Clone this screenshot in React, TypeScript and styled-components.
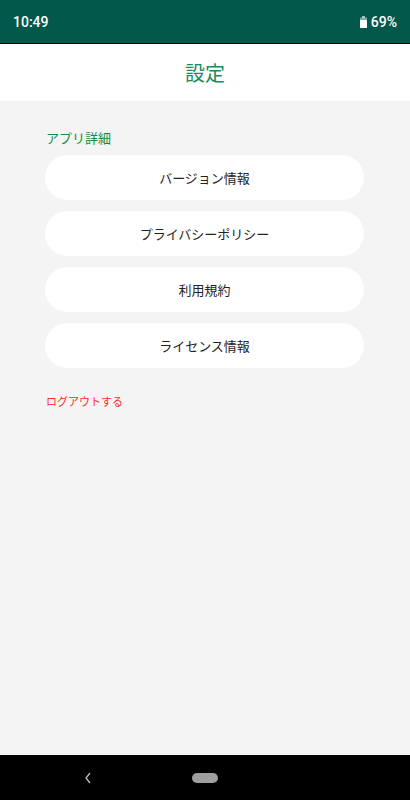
import React from "react";
import styled, { createGlobalStyle } from "styled-components";

const GlobalStyle = createGlobalStyle`
  html, body {
    margin: 0;
    padding: 0;
    background: #f4f4f4;
    font-family: Roboto, "Noto Sans CJK JP", sans-serif;
  }
`;

const Screen = styled.div`
  width: 410px;
  height: 800px;
  display: flex;
  flex-direction: column;
  background: #f4f4f4;
`;

const StatusBar = styled.div`
  height: 43px;
  background: #01584b;
  border-bottom: 1px solid #000;
  display: flex;
  align-items: center;
  justify-content: space-between;
  padding: 0 13px 0 13px;
  color: #fff;
  font-size: 14px;
  font-weight: 500;
`;

const Battery = styled.div`
  display: flex;
  align-items: center;
  gap: 4px;
`;

const Header = styled.div`
  height: 57px;
  background: #fff;
  display: flex;
  align-items: center;
  justify-content: center;
  color: #23885a;
  font-size: 20px;
  font-family: "Noto Sans CJK JP", sans-serif;
`;

const Content = styled.div`
  flex: 1;
  padding: 28px 46px 0 45px;
  display: flex;
  flex-direction: column;
  font-family: "Noto Sans CJK JP", sans-serif;
`;

const SectionLabel = styled.div`
  color: #138a4a;
  font-size: 13px;
  line-height: 18px;
  padding-left: 1px;
  margin-bottom: 8px;
`;

const MenuList = styled.div`
  display: flex;
  flex-direction: column;
  gap: 11px;
`;

const MenuButton = styled.div`
  height: 45px;
  border-radius: 23px;
  background: #fff;
  display: flex;
  align-items: center;
  justify-content: center;
  color: #222;
  font-size: 13px;
`;

const Logout = styled.div`
  margin-top: 24px;
  padding-left: 1px;
  color: #ff2a2a;
  font-size: 11px;
  line-height: 18px;
`;

const NavBar = styled.div`
  height: 45px;
  background: #000;
  display: flex;
  align-items: center;
`;

const BackButton = styled.div`
  width: 20px;
  display: flex;
  justify-content: center;
  margin-left: 78px;
`;

const HomePill = styled.div`
  width: 26px;
  height: 10px;
  border-radius: 5px;
  background: #9e9e9e;
  margin-left: 94px;
`;

const items = ["バージョン情報", "プライバシーポリシー", "利用規約", "ライセンス情報"];

export default function App() {
  return (
    <Screen>
      <GlobalStyle />
      <StatusBar>
        <span>10:49</span>
        <Battery>
          <svg width="7" height="12" viewBox="0 0 7 12">
            <rect x="2" y="0" width="3" height="2" fill="#fff" opacity="0.6" />
            <rect x="0" y="1.5" width="7" height="10.5" rx="0.8" fill="#fff" opacity="0.5" />
            <rect x="0" y="4" width="7" height="8" rx="0.8" fill="#fff" />
          </svg>
          <span>69%</span>
        </Battery>
      </StatusBar>
      <Header>設定</Header>
      <Content>
        <SectionLabel>アプリ詳細</SectionLabel>
        <MenuList>
          {items.map((item) => (
            <MenuButton key={item}>{item}</MenuButton>
          ))}
        </MenuList>
        <Logout>ログアウトする</Logout>
      </Content>
      <NavBar>
        <BackButton>
          <svg width="8" height="12" viewBox="0 0 8 12">
            <path d="M6 1 L2 6 L6 11" stroke="#bdbdbd" strokeWidth="1.3" fill="none" />
          </svg>
        </BackButton>
        <HomePill />
      </NavBar>
    </Screen>
  );
}
